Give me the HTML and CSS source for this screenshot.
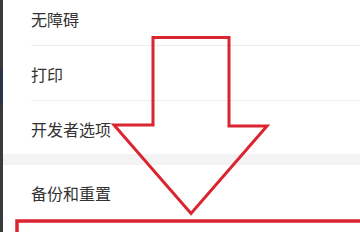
FILE: index.html
```html
<!DOCTYPE html>
<html lang="zh">
<head>
<meta charset="utf-8">
<link rel="stylesheet" href="styles.css">
</head>
<body>
<div class="screen">
  <div class="edge"><div class="edge-blue"></div></div>
  <div class="settings">
    <div class="group first">
      <div class="row"><span class="label">无障碍</span></div>
      <div class="row"><span class="label">打印</span></div>
      <div class="row last"><span class="label">开发者选项</span></div>
    </div>
    <div class="gap"></div>
    <div class="group">
      <div class="row last"><span class="label">备份和重置</span></div>
      <div class="row last"><span class="label">&nbsp;</span></div>
    </div>
  </div>
  <svg class="annot" width="360" height="232" viewBox="0 0 360 232">
    <polygon points="153,37.5 229,37.5 229,126 267,126 191,213.5 114,125 153,125" fill="none" stroke="#da2530" stroke-width="3" stroke-linejoin="miter"/>
    <rect x="17" y="221" width="360" height="40" fill="none" stroke="#da2530" stroke-width="3.5"/>
  </svg>
</div>
</body>
</html>
```
FILE: styles.css
```css
html, body {
  margin: 0;
  padding: 0;
  background: #ffffff;
}
.screen {
  position: relative;
  width: 360px;
  height: 232px;
  overflow: hidden;
  display: flex;
  font-family: "Noto Sans CJK SC", "Noto Sans", sans-serif;
}
.edge {
  width: 3px;
  flex: none;
  background: #3a3a3a;
  display: flex;
  flex-direction: column;
  padding-top: 68px;
}
.edge-blue {
  height: 37px;
  flex: none;
  background: #2d3447;
}
.settings {
  flex: 1;
  display: flex;
  flex-direction: column;
}
.group,
.gap {
  flex: none;
}
.group.first {
  margin-top: -9px;
}
.row {
  height: 55px;
  box-sizing: border-box;
  margin-left: 28px;
  border-bottom: 1px solid #ededed;
  display: flex;
  align-items: center;
  padding-top: 2px;
}
.row.last {
  border-bottom: none;
  height: 53px;
}
.label {
  font-size: 16px;
  line-height: 22px;
  color: #333333;
}
.gap {
  height: 11px;
  background: #f3f3f3;
}
.annot {
  position: absolute;
  left: 0;
  top: 0;
}
```
